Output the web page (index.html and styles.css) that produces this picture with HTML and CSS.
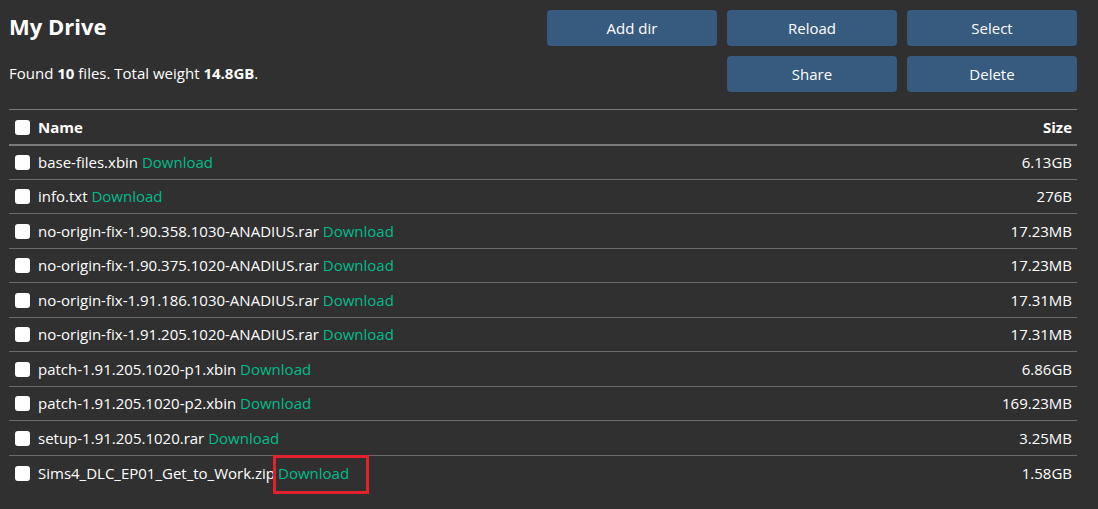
FILE: index.html
```html
<!DOCTYPE html>
<html>
<head>
<meta charset="utf-8">
<link rel="stylesheet" href="styles.css">
</head>
<body>
<div class="page">
  <div class="top">
    <div class="info">
      <h1 class="title">My Drive</h1>
      <p class="summary">Found <b>10</b> files. Total weight <b>14.8GB</b>.</p>
    </div>
    <div class="actions">
      <button class="btn">Add dir</button>
      <button class="btn">Reload</button>
      <button class="btn">Select</button>
      <span class="spacer"></span>
      <button class="btn">Share</button>
      <button class="btn">Delete</button>
    </div>
  </div>
  <table class="files">
    <thead>
      <tr><th class="name"><span class="cb"></span>Name</th><th class="size">Size</th></tr>
    </thead>
    <tbody>
      <tr><td class="name"><span class="cb"></span>base-files.xbin <a class="dl">Download</a></td><td class="size">6.13GB</td></tr>
      <tr><td class="name"><span class="cb"></span>info.txt <a class="dl">Download</a></td><td class="size">276B</td></tr>
      <tr><td class="name"><span class="cb"></span>no-origin-fix-1.90.358.1030-ANADIUS.rar <a class="dl">Download</a></td><td class="size">17.23MB</td></tr>
      <tr><td class="name"><span class="cb"></span>no-origin-fix-1.90.375.1020-ANADIUS.rar <a class="dl">Download</a></td><td class="size">17.23MB</td></tr>
      <tr><td class="name"><span class="cb"></span>no-origin-fix-1.91.186.1030-ANADIUS.rar <a class="dl">Download</a></td><td class="size">17.31MB</td></tr>
      <tr><td class="name"><span class="cb"></span>no-origin-fix-1.91.205.1020-ANADIUS.rar <a class="dl">Download</a></td><td class="size">17.31MB</td></tr>
      <tr><td class="name"><span class="cb"></span>patch-1.91.205.1020-p1.xbin <a class="dl">Download</a></td><td class="size">6.86GB</td></tr>
      <tr><td class="name"><span class="cb"></span>patch-1.91.205.1020-p2.xbin <a class="dl">Download</a></td><td class="size">169.23MB</td></tr>
      <tr><td class="name"><span class="cb"></span>setup-1.91.205.1020.rar <a class="dl">Download</a></td><td class="size">3.25MB</td></tr>
      <tr><td class="name"><span class="cb"></span>Sims4_DLC_EP01_Get_to_Work.zip<a class="dl marked">Download</a></td><td class="size">1.58GB</td></tr>
    </tbody>
  </table>
</div>
</body>
</html>
```
FILE: styles.css
```css
* { box-sizing: border-box; }
html, body { margin: 0; padding: 0; }
html { background: #303030; }
body {
  background: #303030;
  color: #fff;
  font-family: "Open Sans", "Noto Sans", sans-serif;
  font-size: 15px;
  min-height: 509px;
}
.page { padding: 10px 21px 18px 9px; }
.top { display: flex; justify-content: space-between; align-items: flex-start; }
.title { margin: 0; font-size: 22px; font-weight: 700; line-height: 32px; }
.summary { margin: 20px 0 0; line-height: 22px; }
.actions {
  display: grid;
  grid-template-columns: repeat(3, 170px);
  grid-auto-rows: 36px;
  column-gap: 10px;
  row-gap: 10px;
}
.btn {
  background: #375a7f;
  color: #fff;
  border: 0;
  border-radius: 4px;
  font-family: inherit;
  font-size: 15px;
  padding: 0;
}
.files {
  width: 100%;
  border-collapse: collapse;
  margin-top: 17px;
}
.files th, .files td {
  border-top: 1px solid #6a6a6a;
  height: 34.5px;
  padding: 0 5px 0 5px;
  vertical-align: middle;
  line-height: 20px;
}
.files thead th { border-top: 1px solid #7a7a7a; border-bottom: 2px solid #7a7a7a; height: 35px; }
.files th.name { text-align: left; }
.size { text-align: right; }
.cb {
  display: inline-block;
  width: 15px; height: 15px;
  background: #fff;
  border-radius: 3px;
  vertical-align: -2px;
  margin: 0 8px 0 1px;
}
.dl { color: #00bc8c; text-decoration: none; }
.marked { position: relative; margin-left: 3px; }
.marked::after {
  content: "";
  position: absolute;
  left: -5px;
  right: -20px;
  top: -8px;
  bottom: -11px;
  border: 3px solid #e3202b;
}
```
